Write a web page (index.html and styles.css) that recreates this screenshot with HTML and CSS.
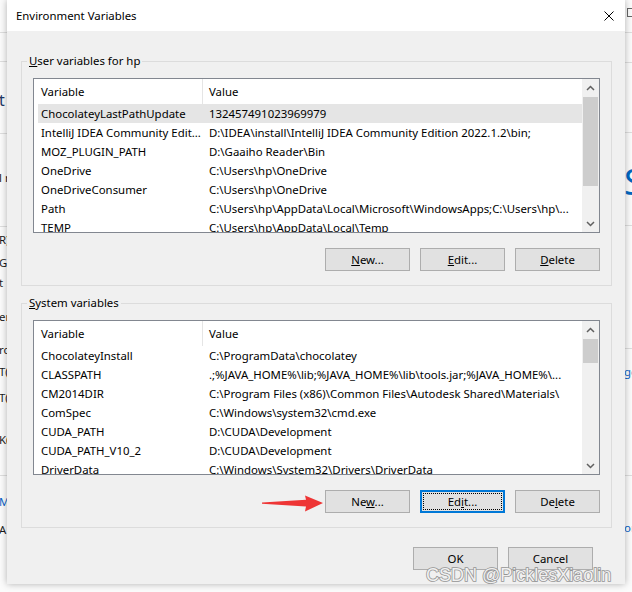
FILE: index.html
```html
<!DOCTYPE html>
<html lang="en">
<head>
<meta charset="utf-8">
<title>Environment Variables</title>
<link rel="stylesheet" href="styles.css">
</head>
<body>
<div class="desk">
  <div class="bg bg-left">
    <div class="bgrow l1"></div>
    <div class="bgrow l2"></div>
    <div class="bgrow l3"><span class="frag head">t</span></div>
    <div class="bgrow l4"><span class="frag">l r</span></div>
    <div class="bgrow l5">
      <span class="frag">R)</span>
      <span class="frag g7">GE</span>
      <span class="frag g4">t</span>
      <span class="frag g18">er</span>
      <span class="frag g17">rc</span>
      <span class="frag g6">T(</span>
      <span class="frag g10">T(</span>
      <span class="frag g26">K(</span>
    </div>
    <div class="bgrow l6">
      <span class="frag link">Mi</span>
      <span class="frag g12">A</span>
    </div>
  </div>

  <div class="dialog">
    <div class="titlebar">
      <span class="title">Environment Variables</span>
      <span class="close"><svg width="10" height="10" viewBox="0 0 10 10"><path d="M0.5 0.5 L9.5 9.5 M9.5 0.5 L0.5 9.5" stroke="#000" stroke-width="1" fill="none"/></svg></span>
    </div>

    <div class="dlg-body">
      <fieldset class="group">
        <legend><u>U</u>ser variables for hp</legend>
        <div class="group-body">
          <div class="listbox">
            <div class="lv">
              <div class="lv-head"><div class="c1">Variable</div><div class="c2">Value</div></div>
              <div class="lv-row sel"><div class="c1">ChocolateyLastPathUpdate</div><div class="c2">132457491023969979</div></div>
              <div class="lv-row"><div class="c1">IntelliJ IDEA Community Edit...</div><div class="c2">D:\IDEA\install\IntelliJ IDEA Community Edition 2022.1.2\bin;</div></div>
              <div class="lv-row"><div class="c1">MOZ_PLUGIN_PATH</div><div class="c2">D:\Gaaiho Reader\Bin</div></div>
              <div class="lv-row"><div class="c1">OneDrive</div><div class="c2">C:\Users\hp\OneDrive</div></div>
              <div class="lv-row"><div class="c1">OneDriveConsumer</div><div class="c2">C:\Users\hp\OneDrive</div></div>
              <div class="lv-row"><div class="c1">Path</div><div class="c2">C:\Users\hp\AppData\Local\Microsoft\WindowsApps;C:\Users\hp\...</div></div>
              <div class="lv-row"><div class="c1">TEMP</div><div class="c2">C:\Users\hp\AppData\Local\Temp</div></div>
            </div>
            <div class="vscroll">
              <div class="sb-btn"><svg width="9" height="6" viewBox="0 0 9 6"><path d="M1 5 L4.5 1.5 L8 5" stroke="#606060" stroke-width="1.5" fill="none"/></svg></div>
              <div class="sb-track"><div class="thumb thumb-user"></div></div>
              <div class="sb-btn"><svg width="9" height="6" viewBox="0 0 9 6"><path d="M1 1 L4.5 4.5 L8 1" stroke="#606060" stroke-width="1.5" fill="none"/></svg></div>
            </div>
          </div>
          <div class="btnrow">
            <button class="btn"><u>N</u>ew...</button>
            <button class="btn"><u>E</u>dit...</button>
            <button class="btn"><u>D</u>elete</button>
          </div>
        </div>
      </fieldset>

      <fieldset class="group group-sys">
        <legend><u>S</u>ystem variables</legend>
        <div class="group-body">
          <div class="listbox">
            <div class="lv">
              <div class="lv-head"><div class="c1">Variable</div><div class="c2">Value</div></div>
              <div class="lv-row"><div class="c1">ChocolateyInstall</div><div class="c2">C:\ProgramData\chocolatey</div></div>
              <div class="lv-row"><div class="c1">CLASSPATH</div><div class="c2">.;%JAVA_HOME%\lib;%JAVA_HOME%\lib\tools.jar;%JAVA_HOME%\...</div></div>
              <div class="lv-row"><div class="c1">CM2014DIR</div><div class="c2">C:\Program Files (x86)\Common Files\Autodesk Shared\Materials\</div></div>
              <div class="lv-row"><div class="c1">ComSpec</div><div class="c2">C:\Windows\system32\cmd.exe</div></div>
              <div class="lv-row"><div class="c1">CUDA_PATH</div><div class="c2">D:\CUDA\Development</div></div>
              <div class="lv-row"><div class="c1">CUDA_PATH_V10_2</div><div class="c2">D:\CUDA\Development</div></div>
              <div class="lv-row"><div class="c1">DriverData</div><div class="c2">C:\Windows\System32\Drivers\DriverData</div></div>
            </div>
            <div class="vscroll">
              <div class="sb-btn"><svg width="9" height="6" viewBox="0 0 9 6"><path d="M1 5 L4.5 1.5 L8 5" stroke="#606060" stroke-width="1.5" fill="none"/></svg></div>
              <div class="sb-track"><div class="thumb thumb-sys"></div></div>
              <div class="sb-btn"><svg width="9" height="6" viewBox="0 0 9 6"><path d="M1 1 L4.5 4.5 L8 1" stroke="#606060" stroke-width="1.5" fill="none"/></svg></div>
            </div>
          </div>
          <div class="btnrow">
            <button class="btn">Ne<u>w</u>...</button>
            <button class="btn focus">Ed<u>i</u>t...</button>
            <button class="btn">De<u>l</u>ete</button>
          </div>
        </div>
      </fieldset>

      <div class="footer">
        <button class="btn">OK</button>
        <button class="btn">Cancel</button>
      </div>
    </div>

    <svg class="annot-arrow" width="64" height="24" viewBox="0 0 64 24">
      <polygon points="0,10.6 44,7.8 43,3.5 61,11 43,19.5 44,14.4 0,11.8" fill="#ee3535"/>
    </svg>
    <div class="watermark">CSDN @PicklesXiaolin</div>
  </div>

  <div class="bg bg-right">
    <div class="bgrow r1"><span class="maxbox"></span></div>
    <div class="bgrow r2"></div>
    <div class="bgrow r3"></div>
    <div class="bgrow r4"><span class="frag bigs">S</span></div>
    <div class="bgrow r5"></div>
    <div class="bgrow r6"><span class="frag link">ge</span></div>
    <div class="bgrow r7"><span class="frag link">ore</span></div>
  </div>
</div>
</body>
</html>
```

FILE: styles.css
```css
* { box-sizing: border-box; }

html, body {
  margin: 0;
  padding: 0;
}

body {
  width: 632px;
  height: 592px;
  overflow: hidden;
  background: #fbfbfb;
  font-family: "Noto Sans", "Liberation Sans", sans-serif;
  font-size: 11.4px;
  color: #000;
}

.desk {
  display: flex;
  align-items: flex-start;
  height: 592px;
}

/* ---------- background window strips ---------- */
.bg {
  flex: none;
  width: 7px;
  height: 592px;
  overflow: hidden;
  background: #fbfbfb;
  display: flex;
  flex-direction: column;
}

.bgrow {
  flex: none;
  display: flex;
  flex-direction: column;
  border-bottom: 1px solid #dedede;
  white-space: nowrap;
}

.frag {
  display: block;
  line-height: 16px;
  height: 16px;
  color: #1b1b1b;
  margin-left: -1px;
}
.frag.head { font-size: 16px; color: #1f3866; }
.frag.link { color: #0a64c8; }
.frag.bigs { font-size: 36px; line-height: 40px; height: 40px; color: #0067c0; }

.l1 { height: 33px; }
.l2 { height: 29px; }
.l3 { height: 72px; padding-top: 30px; }
.l4 { height: 93px; padding-top: 36px; }
.l5 { height: 249px; padding-top: 5px; }
.l6 { flex: 1; border-bottom: none; padding-top: 18px; }

.g4 { margin-top: 4px; }
.g6 { margin-top: 6px; }
.g7 { margin-top: 7px; }
.g10 { margin-top: 10px; }
.g12 { margin-top: 12px; }
.g17 { margin-top: 17px; }
.g18 { margin-top: 18px; }
.g26 { margin-top: 26px; }

.r1 { height: 33px; }
.r2 { height: 30px; }
.r3 { height: 70px; }
.r4 { height: 93px; padding-top: 29px; }
.r5 { height: 123px; }
.r6 { height: 127px; padding-top: 15px; }
.r7 { flex: 1; border-bottom: none; padding-top: 44px; }

.maxbox {
  display: block;
  width: 9px;
  height: 9px;
  margin: 8px 0 0 2px;
  border: 1px solid #666;
}

/* ---------- dialog ---------- */
.dialog {
  flex: none;
  position: relative;
  z-index: 1;
  width: 618px;
  height: 584px;
  background: #f0f0f0;
  box-shadow: 0 0 7px rgba(0, 0, 0, 0.3);
  display: flex;
  flex-direction: column;
}

.titlebar {
  flex: none;
  height: 31px;
  background: #fff;
  display: flex;
  align-items: center;
  padding-left: 9px;
}

.title {
  flex: 1;
  line-height: 16px;
}

.close {
  width: 32px;
  height: 31px;
  display: flex;
  align-items: center;
  justify-content: center;
}

.dlg-body {
  display: flex;
  flex-direction: column;
  padding: 22px 13px 0 14px;
}

.group {
  margin: 0;
  padding: 0;
  min-width: 0;
  border: 1px solid #dcdcdc;
}

.group legend {
  margin-left: 5px;
  padding: 0 2px;
  line-height: 16px;
}

.group-sys { margin-top: 9px; }

.group-body {
  padding: 9px 11px 14px;
}

/* list view */
.listbox {
  height: 155px;
  border: 1px solid #828790;
  background: #fff;
  display: flex;
  overflow: hidden;
}

.lv {
  flex: 1;
  min-width: 0;
  padding-left: 4px;
  overflow: hidden;
}

.lv-head {
  display: flex;
  height: 25px;
  align-items: center;
}

.lv-row {
  display: flex;
  height: 19px;
  align-items: center;
}

.lv-row.sel { background: #e5e5e5; }

.c1 {
  flex: none;
  width: 164px;
  padding-left: 3px;
  line-height: 16px;
  white-space: nowrap;
  overflow: hidden;
}

.c2 {
  flex: 1;
  min-width: 0;
  padding-left: 7px;
  line-height: 16px;
  white-space: nowrap;
  overflow: hidden;
}

.lv-head .c2 {
  align-self: stretch;
  display: flex;
  align-items: center;
  padding-left: 6px;
  border-left: 1px solid #e5e5e5;
}

/* scrollbar */
.vscroll {
  flex: none;
  width: 17px;
  background: #f0f0f0;
  display: flex;
  flex-direction: column;
}

.sb-btn {
  flex: none;
  height: 17px;
  display: flex;
  align-items: center;
  justify-content: center;
}

.sb-track {
  flex: 1;
  padding: 1px 1px 0;
}

.thumb { background: #cdcdcd; }
.thumb-user { height: 89px; }
.thumb-sys { height: 24px; }

/* buttons */
.btnrow {
  display: flex;
  justify-content: flex-end;
  gap: 10px;
  margin-top: 15px;
}

.btn {
  position: relative;
  width: 85px;
  height: 23px;
  padding: 0;
  margin: 0;
  background: #e1e1e1;
  border: 1px solid #adadad;
  border-radius: 0;
  font: inherit;
  line-height: 16px;
  color: #000;
}

.btn.focus {
  border-color: #0078d7;
  box-shadow: inset 0 0 0 1px #0078d7;
}

.btn.focus::after {
  content: "";
  position: absolute;
  inset: 2px;
  border: 1px dotted #000;
}

.footer {
  display: flex;
  justify-content: flex-end;
  gap: 10px;
  margin-top: 19px;
  padding-right: 19px;
}

/* annotations laid over the screenshot */
.annot-arrow {
  position: absolute;
  left: 255px;
  top: 492px;
}

.watermark {
  position: absolute;
  left: 419px;
  top: 566px;
  font-family: "Liberation Sans", Arial, sans-serif;
  font-size: 18px;
  line-height: 18px;
  color: #f0f0f0;
  white-space: nowrap;
  -webkit-text-stroke: 1.6px #949494;
  paint-order: stroke fill;
}
```
